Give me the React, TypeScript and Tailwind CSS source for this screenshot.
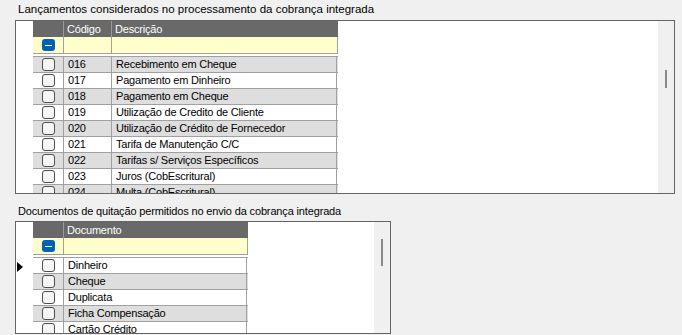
import React from "react"

type Col = { title: string; width: string }

const lancamentos = [
    ["016", "Recebimento em Cheque"],
    ["017", "Pagamento em Dinheiro"],
    ["018", "Pagamento em Cheque"],
    ["019", "Utilização de Credito de Cliente"],
    ["020", "Utilização de Crédito de Fornecedor"],
    ["021", "Tarifa de Manutenção C/C"],
    ["022", "Tarifas s/ Serviços Específicos"],
    ["023", "Juros (CobEscritural)"],
    ["024", "Multa (CobEscritural)"],
]

const documentos = [["Dinheiro"], ["Cheque"], ["Duplicata"], ["Ficha Compensação"], ["Cartão Crédito"]]

function CheckBox() {
    return <div className="w-[13px] h-[13px] rounded-[3px] border border-[#4d4d4d] bg-[#f6f6f6]" />
}

function MinusBox() {
    return (
        <div className="w-[13px] h-[12px] rounded-[3px] bg-[#0063b1] flex items-center justify-center">
            <div className="w-[7px] h-[1px] bg-white" />
        </div>
    )
}

function Grid({
    cols,
    rows,
    thumbTop,
    thumbHeight,
    marker,
    className,
}: {
    cols: Col[]
    rows: string[][]
    thumbTop: string
    thumbHeight: string
    marker?: boolean
    className: string
}) {
    return (
        <div className={`flex border border-[#646464] bg-white overflow-hidden ${className}`}>
            {/* gutter */}
            <div className="w-[17px] shrink-0 relative">
                {marker && (
                    <div className="absolute left-[1px] top-[40px] w-0 h-0 border-y-[5px] border-y-transparent border-l-[6px] border-l-black" />
                )}
            </div>

            <div className="flex flex-col shrink-0 text-[11px] tracking-[-0.2px]">
                {/* cabeçalho */}
                <div className="flex shrink-0 h-[16px] bg-[#696969] text-white">
                    <div className="w-[31px] border-r border-[#9a9a9a]" />
                    {cols.map((c, i) => (
                        <div
                            key={c.title}
                            className={`${c.width} pl-[3px] leading-[16px] ${i < cols.length - 1 ? "border-r border-[#9a9a9a]" : ""}`}
                        >
                            {c.title}
                        </div>
                    ))}
                </div>

                {/* filtro */}
                <div className="flex shrink-0 h-[17px] bg-[#ffffcc] border-b border-r border-[#a0a0a0]">
                    <div className="w-[31px] border-r border-[#a0a0a0] flex items-center justify-center">
                        <MinusBox />
                    </div>
                    {cols.map((c, i) => (
                        <div key={c.title} className={`${c.width} ${i < cols.length - 1 ? "border-r border-[#a0a0a0]" : ""}`} />
                    ))}
                </div>

                <div className="h-[2px] shrink-0" />

                {/* linhas */}
                <div className="shrink-0 border-t border-[#a0a0a0]">
                    {rows.map((r, idx) => (
                        <div
                            key={idx}
                            className={`flex h-[16px] border-b border-[#a0a0a0] ${idx % 2 === 0 ? (marker ? "bg-white" : "bg-[#dedede]") : marker ? "bg-[#dedede]" : "bg-white"}`}
                        >
                            <div className="w-[31px] border-r border-[#a0a0a0] flex items-center justify-center">
                                <CheckBox />
                            </div>
                            {r.map((v, i) => (
                                <div
                                    key={i}
                                    className={`${cols[i].width} pl-[4px] leading-[15px] text-black border-r border-[#a0a0a0] whitespace-nowrap`}
                                >
                                    {v}
                                </div>
                            ))}
                        </div>
                    ))}
                </div>
            </div>

            <div className="flex-1" />

            {/* scrollbar */}
            <div className="w-[16px] shrink-0 bg-[#f0f0f0] relative">
                <div className={`absolute left-[7px] w-[2px] bg-[#8a8a8a] ${thumbTop} ${thumbHeight}`} />
            </div>
        </div>
    )
}

export default function App() {
    return (
        <div
            className="w-[682px] h-[335px] bg-[#f0f0f0] text-[11.5px] text-black pt-[3px] overflow-hidden"
            style={{ fontFamily: '"Liberation Sans", Arial, sans-serif' }}
        >
            <div className="h-[17px] pl-[18px] leading-[13px]">
                Lançamentos considerados no processamento da cobrança integrada
            </div>
            <Grid
                className="ml-[15px] w-[660px] h-[174px]"
                cols={[
                    { title: "Código", width: "w-[48px]" },
                    { title: "Descrição", width: "w-[225px]" },
                ]}
                rows={lancamentos}
                thumbTop="top-[49px]"
                thumbHeight="h-[18px]"
            />

            <div className="mt-[10px] h-[17px] pl-[18px] leading-[13px] text-[11px] tracking-[-0.15px] pt-[1px]">
                Documentos de quitação permitidos no envio da cobrança integrada
            </div>
            <Grid
                className="ml-[15px] w-[376px] h-[113px]"
                cols={[{ title: "Documento", width: "w-[183px]" }]}
                rows={documentos}
                thumbTop="top-[17px]"
                thumbHeight="h-[27px]"
                marker
            />
        </div>
    )
}
